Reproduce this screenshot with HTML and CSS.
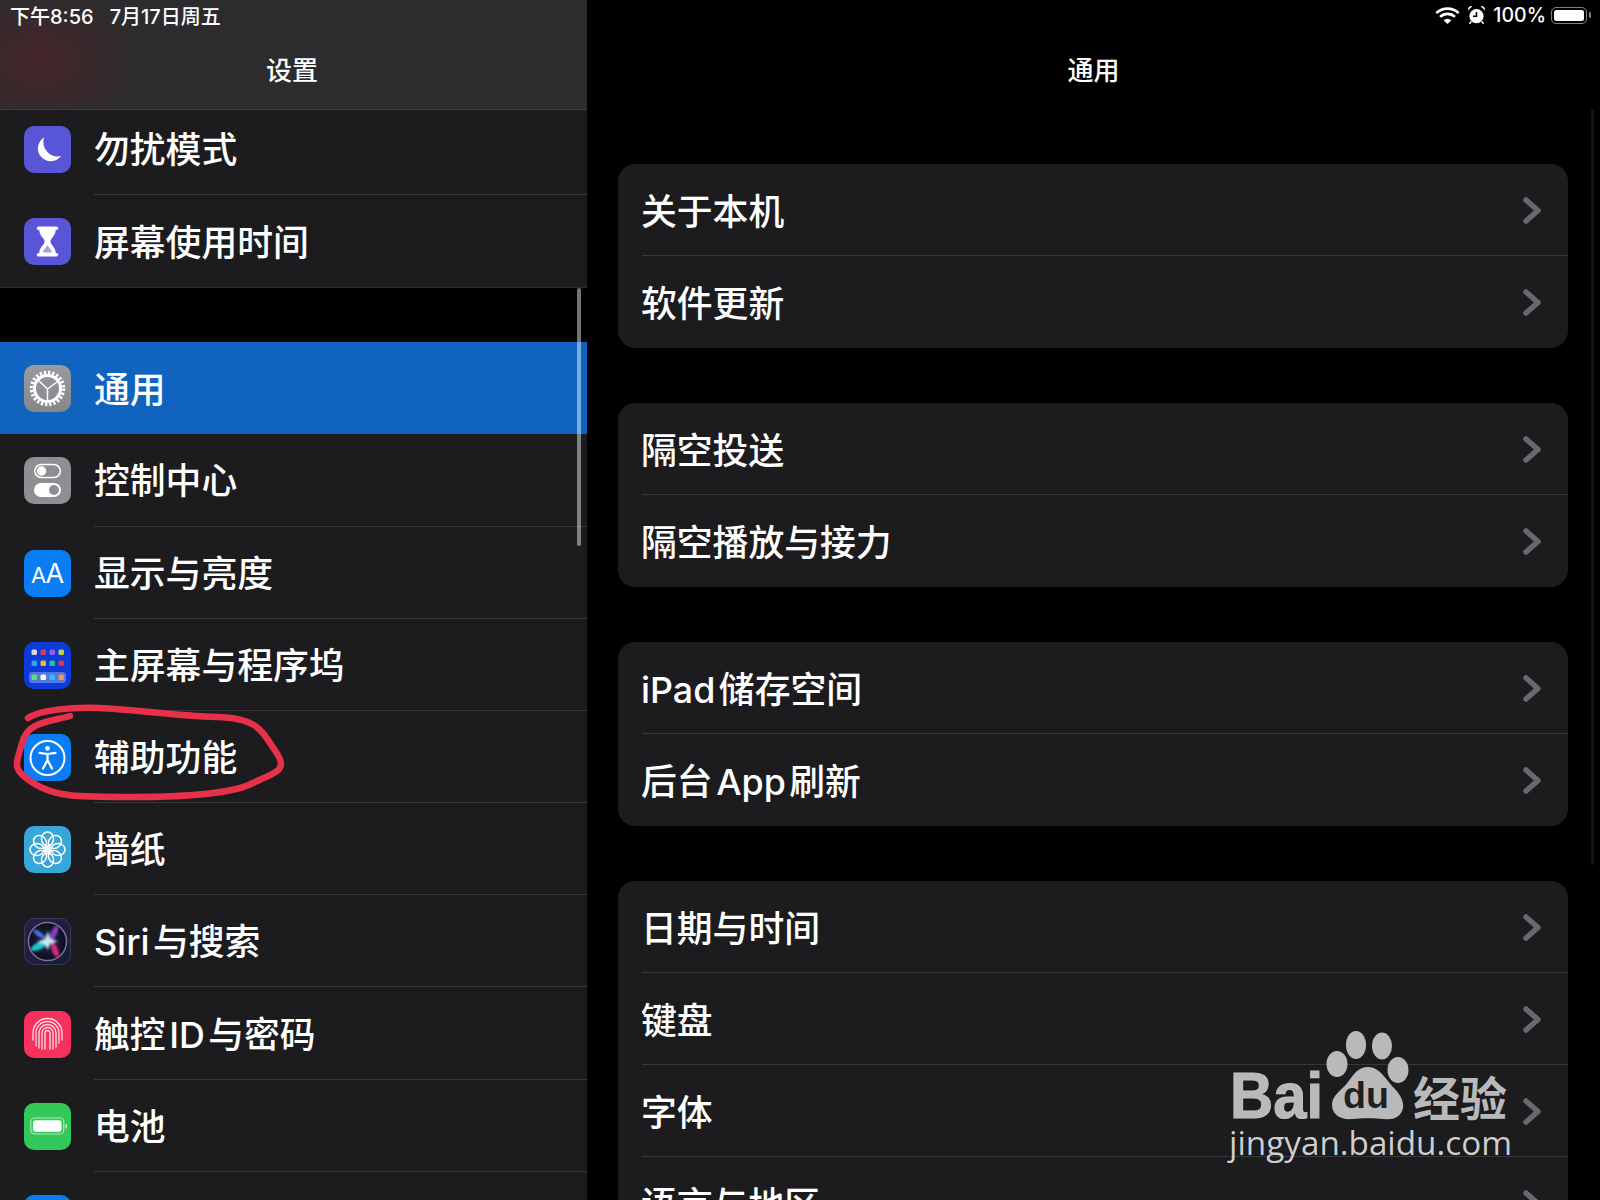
FILE: index.html
```html
<!DOCTYPE html>
<html lang="zh-CN">
<head>
    <meta charset="UTF-8">
    <meta name="viewport" content="width=device-width, initial-scale=1.0">
    <title>设置</title>
    <link rel="stylesheet" href="styles.css">
</head>
<body>
    <div class="screen">
        <aside class="sidebar">
            <header class="bar bar-left">
                <div class="status">
                    <span>下午8:56</span>
                    <span>7月17日周五</span>
                </div>
                <div class="bar-title">设置</div>
            </header>

            <div class="side-list">
                <div class="side-group">
                    <div class="side-row">
                        <svg class="icon" viewBox="0 0 47 47"><rect width="47" height="47" rx="10" fill="#5856d6"/><path d="M20 11.500A12.800 12.800 0 1 0 37 30A14.500 14.500 0 0 1 20 11.500Z" fill="#fff"/></svg>
                        <div class="side-label">勿扰模式</div>
                    </div>
                    <div class="side-row">
                        <svg class="icon" viewBox="0 0 47 47"><rect width="47" height="47" rx="10" fill="#5856d6"/><path d="M14.500 8.500h18a1.500 1.500 0 0 1 0 3.500h-.8c0 6-5.200 8-5.200 11.500s5.200 5.500 5.200 11.500h.8a1.500 1.500 0 0 1 0 3.500h-18a1.500 1.500 0 0 1 0-3.500h.8c0-6 5.200-8 5.200-11.500s-5.200-5.500-5.200-11.500h-.8a1.500 1.500 0 0 1 0-3.500Z" fill="#fff"/><path d="M23.500 27c-1 2.500-4 4-4.500 7.500h9c-.5-3.500-3.500-5-4.500-7.500Z" fill="#5856d6" opacity=".55"/></svg>
                        <div class="side-label">屏幕使用时间</div>
                    </div>
                </div>

                <div class="side-group">
                    <div class="side-row side-row-active">
                        <svg class="icon" viewBox="0 0 47 47"><defs><linearGradient id="greyFill" x1="0" y1="0" x2="0" y2="1"><stop offset="0" stop-color="#9a9a9f"/><stop offset="1" stop-color="#86868b"/></linearGradient></defs><rect width="47" height="47" rx="10" fill="url(#greyFill)"/><circle cx="23.500" cy="23.500" r="16" fill="none" stroke="#fff" stroke-width="3.600" stroke-dasharray="2.300 1.890"/><circle cx="23.500" cy="23.500" r="13" fill="none" stroke="#fff" stroke-width="3"/><path d="M23.500 24V36M23.500 24L33 17M23.500 24L14.500 15.500" stroke="#fff" stroke-width="1.500" fill="none"/></svg>
                        <div class="side-label">通用</div>
                    </div>
                    <div class="side-row">
                        <svg class="icon" viewBox="0 0 47 47"><rect width="47" height="47" rx="10" fill="#8e8e93"/><rect x="10.800" y="7.500" width="25.500" height="13" rx="6.500" fill="none" stroke="#fff" stroke-width="1.500"/><circle cx="17.500" cy="14" r="4.700" fill="#fff"/><rect x="10" y="26" width="27" height="14" rx="7" fill="#fff"/><circle cx="30" cy="33" r="5" fill="#8e8e93"/></svg>
                        <div class="side-label">控制中心</div>
                    </div>
                    <div class="side-row">
                        <svg class="icon" viewBox="0 0 47 47"><rect width="47" height="47" rx="10" fill="#0a7df5"/><text class="icon-text" x="7" y="33" font-size="22">A</text><text class="icon-text" x="21.500" y="33" font-size="27">A</text></svg>
                        <div class="side-label">显示与亮度</div>
                    </div>
                    <div class="side-row">
                        <svg class="icon" viewBox="0 0 47 47"><rect width="47" height="47" rx="10" fill="#0c3bd8"/><rect x="7.500" y="7.500" width="5.500" height="5.500" rx="1.500" fill="#d3d6e4"/><rect x="16.500" y="7.500" width="5.500" height="5.500" rx="1.500" fill="#e0366a"/><rect x="25.500" y="7.500" width="5.500" height="5.500" rx="1.500" fill="#9a5cf0"/><rect x="34.500" y="7.500" width="5.500" height="5.500" rx="1.500" fill="#bcd050"/><rect x="7.500" y="18.500" width="5.500" height="5.500" rx="1.500" fill="#22a6f5"/><rect x="16.500" y="18.500" width="5.500" height="5.500" rx="1.500" fill="#f0b820"/><rect x="25.500" y="18.500" width="5.500" height="5.500" rx="1.500" fill="#20c0a0"/><rect x="34.500" y="18.500" width="5.500" height="5.500" rx="1.500" fill="#e83040"/><rect x="5" y="30" width="37" height="11" rx="3.500" fill="#fff" fill-opacity=".3"/><rect x="7.500" y="32.500" width="5.500" height="5.500" rx="1.500" fill="#5ce070"/><rect x="16.500" y="32.500" width="5.500" height="5.500" rx="1.500" fill="#fff"/><rect x="25.500" y="32.500" width="5.500" height="5.500" rx="1.500" fill="#30c0f5"/><rect x="34.500" y="32.500" width="5.500" height="5.500" rx="1.500" fill="#f09a40"/></svg>
                        <div class="side-label">主屏幕与程序坞</div>
                    </div>
                    <div class="side-row">
                        <svg class="icon" viewBox="0 0 47 47"><rect width="47" height="47" rx="10" fill="#0a7df5"/><circle cx="23.500" cy="24" r="17" fill="none" stroke="#fff" stroke-width="2"/><circle cx="23.500" cy="14.300" r="2.400" fill="#fff"/><path d="M15.500 18.800L23.500 20L31.500 18.800M23.500 20V26.500M23.500 26L19 34.500M23.500 26L28 34.500" fill="none" stroke="#fff" stroke-width="2.200" stroke-linecap="round" stroke-linejoin="round"/></svg>
                        <div class="side-label">辅助功能</div>
                    </div>
                    <div class="side-row">
                        <svg class="icon" viewBox="0 0 47 47"><rect width="47" height="47" rx="10" fill="#39a6da"/><g fill="none" stroke="#fff" stroke-width="1.500"><ellipse cx="23.500" cy="13" rx="6" ry="7"/><ellipse cx="23.500" cy="13" rx="6" ry="7" transform="rotate(45 23.500 23.500)"/><ellipse cx="23.500" cy="13" rx="6" ry="7" transform="rotate(90 23.500 23.500)"/><ellipse cx="23.500" cy="13" rx="6" ry="7" transform="rotate(135 23.500 23.500)"/><ellipse cx="23.500" cy="13" rx="6" ry="7" transform="rotate(180 23.500 23.500)"/><ellipse cx="23.500" cy="13" rx="6" ry="7" transform="rotate(225 23.500 23.500)"/><ellipse cx="23.500" cy="13" rx="6" ry="7" transform="rotate(270 23.500 23.500)"/><ellipse cx="23.500" cy="13" rx="6" ry="7" transform="rotate(315 23.500 23.500)"/></g><circle cx="23.500" cy="23.500" r="3" fill="#fff"/></svg>
                        <div class="side-label">墙纸</div>
                    </div>
                    <div class="side-row">
                        <svg class="icon" viewBox="0 0 47 47"><defs><linearGradient id="siriBg" x1="0" y1="0" x2="1" y2="1"><stop offset="0" stop-color="#32194f"/><stop offset="1" stop-color="#10203a"/></linearGradient><radialGradient id="siriCore"><stop offset="0" stop-color="#202a45"/><stop offset="1" stop-color="#0c0d1c"/></radialGradient><filter id="siriBlur"><feGaussianBlur stdDeviation="1"/></filter></defs><rect x=".5" y=".5" width="46" height="46" rx="10" fill="url(#siriBg)" stroke="#3a3c52"/><circle cx="23.500" cy="23.500" r="19" fill="url(#siriCore)" stroke="#7d6f96" stroke-width="1.500"/><g filter="url(#siriBlur)"><ellipse cx="15" cy="28" rx="9" ry="3.500" fill="#16c6d0" transform="rotate(-25 15 28)"/><ellipse cx="30" cy="15" rx="3" ry="8" fill="#8a3cc8" transform="rotate(25 30 15)"/><ellipse cx="31" cy="32" rx="3" ry="8" fill="#d82a7e" transform="rotate(-20 31 32)"/><ellipse cx="15" cy="16" rx="7" ry="2.500" fill="#4a6ee0" transform="rotate(35 15 16)"/><path d="M24 13L26 21L34 23L26 26L23.500 32L21 26L13 24L21 21Z" fill="#dff6ff" fill-opacity=".9"/></g></svg>
                        <div class="side-label">Siri 与搜索</div>
                    </div>
                    <div class="side-row">
                        <svg class="icon" viewBox="0 0 47 47"><rect width="47" height="47" rx="10" fill="#f7305d"/><g fill="none" stroke="#fff" stroke-opacity=".85" stroke-width="1.300" stroke-linecap="round"><path d="M9 29V22a14.500 14.500 0 0 1 29 0v7"/><path d="M12 35V22a11.500 11.500 0 0 1 23 0v10"/><path d="M15 37V22a8.500 8.500 0 0 1 17 0v14"/><path d="M18 38V22a5.500 5.500 0 0 1 11 0v16"/><path d="M21 38V22a2.500 2.500 0 0 1 5 0v16"/></g></svg>
                        <div class="side-label">触控 ID 与密码</div>
                    </div>
                    <div class="side-row">
                        <svg class="icon" viewBox="0 0 47 47"><rect width="47" height="47" rx="10" fill="#34c759"/><rect x="6.800" y="15" width="33" height="16" rx="4" fill="none" stroke="#fff" stroke-opacity=".6" stroke-width="1.200"/><rect x="9" y="17.200" width="28.500" height="11.500" rx="2.500" fill="#fff"/><rect x="41.500" y="21" width="1.500" height="4.500" rx=".7" fill="#fff" fill-opacity=".7"/></svg>
                        <div class="side-label">电池</div>
                    </div>
                    <div class="side-row">
                        <svg class="icon" viewBox="0 0 47 47"><rect width="47" height="47" rx="10" fill="#0a7df5"/></svg>
                        <div class="side-label"></div>
                    </div>
                </div>
            </div>
            <div class="side-scroll"></div>
        </aside>

        <main class="detail">
            <header class="bar">
                <div class="status status-right">
                    <svg class="wifi" viewBox="0 0 23 16"><path d="M1 5.800a15 15 0 0 1 21 0M4.500 9.300a10 10 0 0 1 14 0" fill="none" stroke="#fff" stroke-width="2.500"/><path d="M7.800 12.500a5.300 5.300 0 0 1 7.400 0L11.500 16Z" fill="#fff"/></svg>
                    <svg class="alarm" viewBox="0 0 16 17"><circle cx="8" cy="9.500" r="6" fill="#fff"/><path d="M8 6V9.500H5" fill="none" stroke="#000" stroke-width="1.300"/><path d="M.8 4.500A3 3 0 0 1 4.500 1ZM15.200 4.500A3 3 0 0 0 11.500 1Z" fill="#fff"/><path d="M3.500 14L2 16M12.500 14L14 16" stroke="#fff" stroke-width="1.300"/></svg>
                    <span class="percent">100%</span>
                    <div class="battery"><div class="battery-fill"></div></div>
                </div>
                <div class="bar-title">通用</div>
            </header>

            <div class="cards">
                <section class="card">
                    <div class="card-row"><span>关于本机</span><svg class="chevron" viewBox="0 0 18 27"><path d="M3 3L15 13.500L3 24"/></svg></div>
                    <div class="card-row"><span>软件更新</span><svg class="chevron" viewBox="0 0 18 27"><path d="M3 3L15 13.500L3 24"/></svg></div>
                </section>
                <section class="card">
                    <div class="card-row"><span>隔空投送</span><svg class="chevron" viewBox="0 0 18 27"><path d="M3 3L15 13.500L3 24"/></svg></div>
                    <div class="card-row"><span>隔空播放与接力</span><svg class="chevron" viewBox="0 0 18 27"><path d="M3 3L15 13.500L3 24"/></svg></div>
                </section>
                <section class="card">
                    <div class="card-row"><span>iPad 储存空间</span><svg class="chevron" viewBox="0 0 18 27"><path d="M3 3L15 13.500L3 24"/></svg></div>
                    <div class="card-row"><span>后台 App 刷新</span><svg class="chevron" viewBox="0 0 18 27"><path d="M3 3L15 13.500L3 24"/></svg></div>
                </section>
                <section class="card">
                    <div class="card-row"><span>日期与时间</span><svg class="chevron" viewBox="0 0 18 27"><path d="M3 3L15 13.500L3 24"/></svg></div>
                    <div class="card-row"><span>键盘</span><svg class="chevron" viewBox="0 0 18 27"><path d="M3 3L15 13.500L3 24"/></svg></div>
                    <div class="card-row"><span>字体</span><svg class="chevron" viewBox="0 0 18 27"><path d="M3 3L15 13.500L3 24"/></svg></div>
                    <div class="card-row"><span>语言与地区</span><svg class="chevron" viewBox="0 0 18 27"><path d="M3 3L15 13.500L3 24"/></svg></div>
                </section>
            </div>
            <div class="detail-scroll"></div>
        </main>

        <!-- hand drawn mark round the row -->
        <svg class="pen-mark" viewBox="0 680 320 150">
            <path d="M28 718C40 710 70 707 100 708S175 716 217 717S262 732 276 752S272 773 253 783S190 797 133 797S55 797 33 783S16 765 22 743S50 722 70 716"/>
        </svg>

        <svg class="watermark" viewBox="1220 1020 300 150">
            <text class="wm-bai" x="1230" y="1118" textLength="93" lengthAdjust="spacingAndGlyphs">Bai</text>
            <ellipse cx="1356" cy="1045" rx="10" ry="14"/>
            <ellipse cx="1382" cy="1046" rx="10" ry="13.500"/>
            <ellipse cx="1337" cy="1064" rx="10.500" ry="13"/>
            <ellipse cx="1398" cy="1070" rx="10.500" ry="13"/>
            <path d="M1368 1067C1380 1067 1386 1080 1394 1088C1402 1096 1404 1104 1403 1108C1401 1118 1392 1120 1384 1119C1374 1118 1362 1118 1352 1119C1342 1120 1333 1116 1332 1106C1331 1096 1342 1090 1348 1082C1354 1074 1358 1067 1368 1067Z"/>
            <text class="wm-du" x="1343" y="1108" textLength="46" lengthAdjust="spacingAndGlyphs">du</text>
            <text class="wm-cn" x="1413" y="1116" textLength="94" lengthAdjust="spacingAndGlyphs">经验</text>
            <text class="wm-url" x="1229" y="1155" textLength="283" lengthAdjust="spacingAndGlyphs">jingyan.baidu.com</text>
        </svg>
    </div>
</body>
</html>
```

FILE: styles.css
```css
body {
    margin: 0;
    background-color: #000;
    font-family: Inter, "Noto Sans CJK SC", sans-serif;
    color: #fff;
}

.screen {
    position: relative;
    display: flex;
    width: 1600px;
    height: 1200px;
    overflow: hidden;
}

.sidebar {
    position: relative;
    flex: none;
    width: 587px;
    height: 100%;
    overflow: hidden;
}

.bar {
    position: relative;
    z-index: 1;
    height: 110px;
    box-sizing: border-box;
    display: flex;
    flex-direction: column;
}

.bar-left {
    background: radial-gradient(ellipse 105px 75px at 40px 60px, #46252a, rgba(70, 37, 42, 0) 100%), #2c2c2e;
    border-bottom: 1px solid #3a3a3c;
}

.status {
    height: 30px;
    display: flex;
    align-items: center;
    gap: 16px;
    padding-left: 10px;
    font-size: 20px;
    font-weight: 500;
    flex: none;
}

.status-right {
    justify-content: flex-end;
    gap: 7px;
    padding: 0 9px 0 0;
}

.bar-title {
    flex: 1;
    display: flex;
    align-items: center;
    justify-content: center;
    padding-bottom: 3px;
    font-size: 26px;
    font-weight: 500;
}

.bar-left .bar-title {
    padding-right: 3px;
}

.wifi {
    width: 25px;
    height: 17px;
}

.alarm {
    width: 19px;
    height: 20px;
}

.percent {
    margin-right: -2px;
    font-size: 19.5px;
    font-weight: 500;
}

.battery {
    position: relative;
    width: 36px;
    height: 17px;
    box-sizing: border-box;
    padding: 2px;
    margin-right: 4px;
    border: 1.5px solid rgba(255, 255, 255, 0.5);
    border-radius: 5px;
}

.battery::after {
    content: "";
    position: absolute;
    right: -4.5px;
    top: 4px;
    width: 2px;
    height: 6px;
    border-radius: 1px;
    background-color: rgba(255, 255, 255, 0.5);
}

.battery-fill {
    height: 100%;
    border-radius: 2.5px;
    background-color: #fff;
}

.side-list {
    margin-top: -7px;
    display: flex;
    flex-direction: column;
    gap: 53.8px;
}

.side-group {
    background-color: #1c1c1e;
}

.side-group:first-child {
    border-bottom: 1px solid #2c2c2e;
}

.side-row {
    display: flex;
    align-items: center;
    height: 92.2px;
    padding-left: 23.5px;
}

.side-row-active {
    background-color: #1064bf;
}

.icon {
    flex: none;
    width: 47px;
    height: 47px;
    margin-top: 1px;
    margin-right: 23.5px;
}

.icon-text {
    font-family: Inter, sans-serif;
    fill: #fff;
}

.side-label {
    flex: 1;
    height: 100%;
    display: flex;
    align-items: center;
    box-sizing: border-box;
    padding-bottom: 3px;
    border-bottom: 1px solid #38383a;
    font-size: 35.8px;
    font-weight: 500;
    word-spacing: -6px;
}

.side-row-active .side-label,
.side-group:first-child .side-row:last-child .side-label {
    border-bottom: none;
}

.side-scroll {
    position: absolute;
    left: 577px;
    top: 288px;
    width: 4px;
    height: 258px;
    border-radius: 2px;
    background-color: rgba(255, 255, 255, 0.45);
}

.detail {
    position: relative;
    flex: 1;
    min-width: 0;
}

.cards {
    display: flex;
    flex-direction: column;
    gap: 55px;
    margin-top: 54px;
    padding-left: 31px;
    padding-right: 32px;
}

.card {
    background-color: #1c1c1e;
    border-radius: 17px;
    overflow: hidden;
}

.card-row {
    display: flex;
    align-items: center;
    justify-content: space-between;
    height: 92px;
    margin-left: 24px;
    padding-right: 27px;
    box-sizing: border-box;
    border-bottom: 1px solid #38383a;
    font-size: 35.8px;
    font-weight: 500;
    word-spacing: -6px;
}

.card-row span {
    margin-left: -1px;
    padding-bottom: 2px;
}

.card-row:last-child {
    border-bottom: none;
}

.chevron {
    flex: none;
    width: 18px;
    height: 27px;
    margin-top: 1px;
    fill: none;
    stroke: #68686d;
    stroke-width: 5.5;
    stroke-linecap: round;
    stroke-linejoin: round;
}

.detail-scroll {
    position: absolute;
    right: 6px;
    top: 109px;
    width: 3px;
    height: 756px;
    border-radius: 2px;
    background-color: #161616;
}

.pen-mark {
    position: absolute;
    left: 0;
    top: 680px;
    width: 320px;
    height: 150px;
    fill: none;
    stroke: #e8304a;
    stroke-width: 6.5;
    stroke-linecap: round;
}

.watermark {
    position: absolute;
    left: 1220px;
    top: 1020px;
    width: 300px;
    height: 150px;
    fill: #bfbfbf;
    fill-opacity: 0.97;
}

.wm-bai {
    font-family: "Liberation Sans", sans-serif;
    font-weight: 700;
    font-size: 65px;
    stroke: #bfbfbf;
    stroke-width: 1.2;
}

.wm-du {
    font-family: "Liberation Sans", sans-serif;
    font-size: 36px;
    font-weight: 700;
    fill: #1c1c1e;
}

.wm-cn {
    font-family: "Noto Sans CJK SC", sans-serif;
    font-size: 47px;
    font-weight: 700;
}

.wm-url {
    font-family: "Open Sans", sans-serif;
    font-size: 33px;
    fill: #d4d4d4;
}
```
